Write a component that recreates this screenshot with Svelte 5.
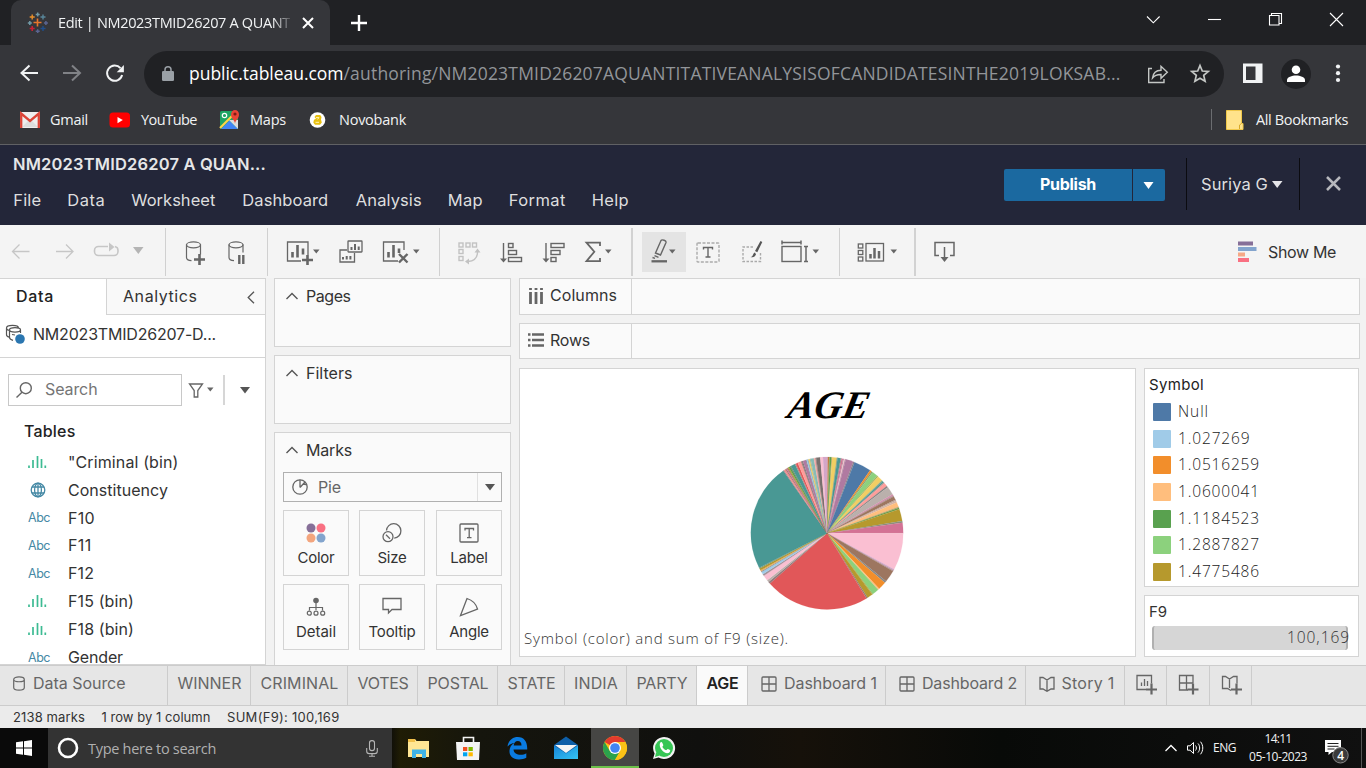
<script>
  // Spreads letters so that a label takes exactly the given width.
  function fit(node, width) {
    const natural = node.getBoundingClientRect().width;
    const count = node.textContent.length;
    node.style.letterSpacing = `${(width - natural) / count}px`;
  }

  const menus = [
    ['File', 28, 54], ['Data', 38, 64], ['Worksheet', 84, 111], ['Dashboard', 86, 113.5],
    ['Analysis', 66, 92], ['Map', 35, 61], ['Format', 57, 83], ['Help', 37, 60]
  ];

  const fields = [
    ['bin', '"Criminal (bin)', 110.5], ['geo', 'Constituency', 100], ['abc', 'F10', 27], ['abc', 'F11', 23.5],
    ['abc', 'F12', 26], ['bin', 'F15 (bin)', 66], ['bin', 'F18 (bin)', 66], ['abc', 'Gender', 55]
  ];

  const legend = [
    ['#4e79a7', 'Null', 31], ['#a0cbe8', '1.027269', 72.5], ['#f28e2b', '1.0516259', 82], ['#ffbe7d', '1.0600041', 82],
    ['#59a14f', '1.1184523', 82], ['#8cd17d', '1.2887827', 82], ['#b6992d', '1.4775486', 82]
  ];

  const sheets = [
    ['WINNER', 64, 83], ['CRIMINAL', 78, 97], ['VOTES', 51, 70], ['POSTAL', 61, 80],
    ['STATE', 48, 67], ['INDIA', 44, 62], ['PARTY', 51, 70]
  ];

  // Slice end angles in degrees, clockwise from the top.
  const slices = [
    [0.6, '#d4a6c8'], [1.6, '#c07a3c'], [2.1, '#9aa05f'], [3.3, '#59a14f'], [3.9, '#a3a15c'], [7.4, '#f1ce63'], [8, '#8f9a72'],
    [10.4, '#499894'], [11, '#8d8a84'], [12.2, '#d37295'], [12.9, '#b08a98'], [13.7, '#fabfd2'], [14.3, '#a98a9c'],
    [20.2, '#b07aa1'], [21.2, '#8b8087'], [34.4, '#4e79a7'], [35.8, '#f28e2b'], [36.9, '#8f9c6c'],
    [41.2, '#8cd17d'], [42.1, '#a3b35c'], [46.2, '#f1ce63'], [47, '#86a88b'], [48.3, '#499894'], [49, '#b8938f'],
    [51.7, '#ff9d9a'], [53, '#8a8483'], [59.2, '#bab0ac'], [60.6, '#d293ae'], [61.2, '#a9848b'], [64, '#9d7660'],
    [64.8, '#b79f92'], [66.2, '#d7b5a6'], [69.7, '#ffbe7d'], [70.5, '#c0a66e'], [71.7, '#6c9d4c'],
    [80.8, '#b6992d'], [82.2, '#8b8e7c'], [90, '#d37295'], [118.2, '#fabfd2'], [119.3, '#d4a6c8'], [120, '#a98c91'],
    [129.2, '#9d7660'], [130.6, '#858789'], [136.8, '#f28e2b'], [137.9, '#ffbe7d'], [143, '#8cd17d'], [143.6, '#9eae53'],
    [147.8, '#b6992d'], [148.8, '#8f7f71'], [228.6, '#e15759'], [230.2, '#94787a'], [231.8, '#bab0ac'], [236, '#fabfd2'],
    [237.4, '#a39299'], [239.3, '#a0cbe8'], [240, '#8d8f8c'], [240.9, '#f1ac5f'], [242.3, '#b6992d'], [243, '#7e9570'],
    [325, '#499894'], [325.6, '#8b8582'], [326.9, '#f08d91'], [327.7, '#9e7468'], [328.5, '#d37295'], [329.1, '#98785b'],
    [329.9, '#b6992d'], [331.1, '#59a14f'], [331.7, '#6a7f61'], [335.1, '#499894'], [335.9, '#a58b86'], [337.4, '#e15759'],
    [340, '#ff9d9a'], [340.7, '#9b7979'], [341.5, '#79706e'], [343.7, '#b07aa1'], [344.3, '#897386'],
    [345.2, '#a0cbe8'], [345.8, '#7da1b8'], [346.9, '#f1ce63'], [347.5, '#a1b090'], [350, '#86bcb6'], [351.2, '#f5a9a5'],
    [351.8, '#a58481'], [354.9, '#79706e'], [357, '#fabfd2'], [360, '#d4a6c8']
  ].map(([end, color], i, all) => {
    const start = i ? all[i - 1][0] : 0;
    const point = (a) => {
      const r = (a * Math.PI) / 180;
      return `${(827.3 + 76.2 * Math.sin(r)).toFixed(2)} ${(533.2 - 76.2 * Math.cos(r)).toFixed(2)}`;
    };
    return { color, d: `M827.3 533.2L${point(start)}A76.2 76.2 0 ${end - start > 180 ? 1 : 0} 1 ${point(end)}Z` };
  });
</script>

{#snippet t(text, width, cls = '')}
  <span class="t {cls}" use:fit={width}>{text}</span>
{/snippet}

<div class="screen">
  <!-- Browser -->
  <div class="tabstrip">
    <div class="tab">
      <svg class="favicon" width="21" height="21" viewBox="27 12 21 21" fill="none">
        <path d="M37.5 18.5v8M33.5 22.5h8" stroke="#e8762c" stroke-width="1.6" />
        <path d="M32.2 14.5v5M29.7 17h5" stroke="#eb9129" stroke-width="1.4" />
        <path d="M43 14.5v5M40.5 17h5" stroke="#59879b" stroke-width="1.4" />
        <path d="M32.2 26v5M29.7 28.5h5" stroke="#c72035" stroke-width="1.6" />
        <path d="M43 26v5M40.5 28.5h5" stroke="#1f4e8c" stroke-width="1.4" />
        <path d="M37.7 12.5v4M35.7 14.5h4M29.8 21v4M27.8 23h4" stroke="#7199a6" stroke-width="1.5" />
        <path d="M45.9 21v4M43.9 23h4M37.7 29.2v4M35.7 31.2h4" stroke="#5b6591" stroke-width="1.5" />
      </svg>
      <div class="tabtitle">{@render t('Edit | NM2023TMID26207 A QUANT', 232)}</div>
      <svg width="12" height="12" viewBox="0 0 12 12"><path d="M1 1l10 10M11 1L1 11" stroke="#fff" stroke-width="2" /></svg>
    </div>
    <svg class="newtab" width="16" height="16" viewBox="0 0 16 16"><path d="M8 0v16M0 8h16" stroke="#fff" stroke-width="2.4" /></svg>
    <svg class="winbtns" width="226" height="45" viewBox="1140 0 226 45" fill="none" stroke="#fff" stroke-width="1.1">
      <path d="M1147 16.5l6.3 6.3 6.3-6.3" />
      <path d="M1208 19.5h13" />
      <path d="M1269.5 15.5h9.5v9.5h-9.5zM1271.5 15.5v-2h10v10h-2.300" />
      <path d="M1330 13l13 13M1343 13l-13 13" />
    </svg>
  </div>

  <div class="addressrow">
    <svg width="144" height="57" viewBox="0 45 144 57" fill="none" stroke-width="2">
      <path d="M38 73H22M29.500 65.500L21.500 73l8 7.500" stroke="#f1f3f4" />
      <path d="M63 73h16M72 65.500l8 7.500-8 7.500" stroke="#808286" />
      <path d="M120.500 68.200a7.600 7.600 0 1 0 1.600 6.800" stroke="#f1f3f4" />
      <path d="M123.900 65v7.200h-7.200z" fill="#f1f3f4" />
    </svg>
    <div class="omnibox">
      <svg width="12" height="16" viewBox="0 0 12 16"><rect y="5" width="12" height="10" rx="1.300" fill="#9aa0a6" /><path d="M3 6V3.800a3 3 0 0 1 6 0V6" fill="none" stroke="#9aa0a6" stroke-width="1.500" /></svg>
      <div class="url">{@render t('public.tableau.com', 154.500, 'host')}{@render t('/authoring/NM2023TMID26207AQUANTITATIVEANALYSISOFCANDIDATESINTHE2019LOKSAB...', 777)}</div>
      <svg width="72" height="45" viewBox="1144 52 72 45" fill="none" stroke="#c4c7c5" stroke-width="1.400">
        <path d="M1152 68.500h-3.300v14h15.300v-3.500" />
        <path d="M1152.500 78c.6-5 3.700-7.600 8.500-7.700v-4l6.300 6-6.300 6v-3.800c-3.800-.1-6.400.9-8.500 3.500z" />
        <path d="M1200 65.500l2.300 5.500 6 .5-4.600 3.900 1.400 5.900-5.100-3.100-5.100 3.100 1.400-5.900-4.600-3.900 6-.5z" stroke-width="1.700" />
      </svg>
    </div>
    <svg width="142" height="57" viewBox="1224 45 142 57">
      <path d="M1243 63.500h19.500v19.500h-19.500zM1246 66.500v13.500h9.500V66.500z" fill="#f1f3f4" fill-rule="evenodd" />
      <circle cx="1296" cy="74" r="15" fill="#202124" />
      <circle cx="1296" cy="69.800" r="4.300" fill="#fff" />
      <path d="M1287 82v-2c0-3 5-4.500 9-4.500s9 1.500 9 4.500v2z" fill="#fff" />
      <g fill="#f1f3f4"><circle cx="1338" cy="66.500" r="2.100" /><circle cx="1338" cy="73.200" r="2.100" /><circle cx="1338" cy="80" r="2.100" /></g>
    </svg>
  </div>

  <div class="bookmarks">
    <svg width="50" height="34" viewBox="0 103 50 34">
      <rect x="20" y="112" width="20" height="16" rx="1" fill="#eee" />
      <path d="M22 127l8-8 8 8z" fill="#ddd" />
      <path d="M21.200 128v-14.500l8.800 7.500 8.800-7.500V128" fill="none" stroke="#db4437" stroke-width="2.300" />
    </svg>
    {@render t('Gmail', 38)}
    <svg width="53" height="34" viewBox="88 103 53 34"><rect x="109.500" y="112.500" width="20.500" height="15" rx="3.500" fill="#f00" /><path d="M117.500 117v6.200l5.300-3.100z" fill="#fff" /></svg>
    {@render t('YouTube', 56)}
    <svg width="53" height="34" viewBox="197 103 53 34">
      <rect x="220" y="111" width="18" height="18" rx="1.500" fill="#1fa463" />
      <path d="M221 129l8.500-8.500 8.500 8.500z" fill="#4285f4" />
      <path d="M220 128l16-16" stroke="#ffd54a" stroke-width="2.200" />
      <path d="M229 120l9 9v-9z" fill="#ddd" />
      <circle cx="224.500" cy="115.500" r="2.200" fill="none" stroke="#fff" stroke-width="1.200" />
      <path d="M235 124c0-4-4-5-4-9.500a4 4.500 0 0 1 8 0c0 4.500-4 5.500-4 9.500z" fill="#ea4335" /><circle cx="235" cy="114" r="1.600" fill="#7d1c14" />
    </svg>
    {@render t('Maps', 36)}
    <svg width="53" height="34" viewBox="286 103 53 34">
      <circle cx="317.500" cy="120" r="7.800" fill="#fff" />
      <path d="M314.500 117l1.500-2h4.200l1.300 2-.5 2.500.8 3-1.800 2.300h-5l-1.700-2.300.7-2.700 2-1z" fill="#e8c010" />
      <path d="M316 117.600h3l-1.500 1.800M315.500 122.300h3.500" fill="none" stroke="#fff3b8" />
    </svg>
    {@render t('Novobank', 67)}
    <div class="grow"></div>
    <svg width="45" height="34" viewBox="1211 103 45 34">
      <path d="M1211.500 109v21" stroke="#6b6d70" />
      <path d="M1226.500 110.500h15v13h1.500v6h-16.500z" fill="#ffe38b" stroke="#f0c84a" />
      <path d="M1239.500 129v-4l2-1.500" fill="none" stroke="#d9a928" />
    </svg>
    {@render t('All Bookmarks', 92)}
  </div>

  <!-- Workbook header -->
  <header>
    <div class="headleft">
      <div class="book">{@render t('NM2023TMID26207 A QUAN...', 253)}</div>
      <nav>
        {#each menus as [name, w, cell]}
          <div class="menu" style:width="{cell}px">{@render t(name, w)}</div>
        {/each}
      </nav>
    </div>
    <div class="publish">{@render t('Publish', 56)}</div>
    <div class="publishmore"><svg width="11" height="7" viewBox="0 0 11 7"><path d="M.5 0h10L5.500 7z" fill="#fff" /></svg></div>
    <div class="user">
      {@render t('Suriya G', 67)}
      <svg width="11" height="7" viewBox="0 0 11 7"><path d="M0 0h10.500L5.200 7z" fill="#e4e4e8" /></svg>
    </div>
    <svg class="close" width="15" height="15" viewBox="0 0 15 15"><path d="M1 1l13 13M14 1L1 14" stroke="#b7b8bd" stroke-width="2.500" /></svg>
  </header>

  <!-- Toolbar -->
  <div class="toolbar">
    <svg width="166" height="53" viewBox="0 225 166 53" fill="none" stroke="#c6c6c6" stroke-width="1.300">
      <path d="M29.500 251.500h-17M19.500 244.500l-7 7 7 7" />
      <path d="M56 251.500h17M66 244.500l7 7-7 7" />
      <path d="M108 246.500h-9.500a4 4 0 0 0-4 4v1a4 4 0 0 0 4 4h15.500a4 4 0 0 0 4-4v-1a4 4 0 0 0-3-4" stroke-width="1.600" />
      <path d="M109 242.500l5.500 4.500-5.500 4.500z" fill="#c6c6c6" stroke="none" />
      <path d="M133 247h10.500l-5.200 7z" fill="#b4b4b4" stroke="none" />
      <path d="M165.500 228v48" stroke="#d0d0d0" stroke-width="1" />
    </svg>
    <svg width="102" height="53" viewBox="166 225 102 53" fill="none" stroke="#666" stroke-width="1.200">
      <ellipse cx="193.500" cy="244.800" rx="7" ry="3" /><path d="M186.500 244.500v13c0 2 2 3 5 3.200M200.500 244.500v10" />
      <path d="M199.500 254v11M194 259.500h11" stroke-width="2.600" />
      <ellipse cx="236" cy="244.800" rx="7" ry="3" /><path d="M229 244.500v13c0 2 2 3 5 3.200M243 244.500v8" />
      <path d="M239.300 255v9M243.300 255v9" stroke-width="2.400" />
      <path d="M267.500 228v48" stroke="#d0d0d0" stroke-width="1" />
    </svg>
    <svg width="172" height="53" viewBox="268 225 172 53" fill="none" stroke="#666" stroke-width="1.300">
      <path d="M301 261h-13.500v-19h20.500v13" />
      <path d="M292.500 252v5.500M297.500 245v12.500M303 248.500v6" stroke-width="2.600" />
      <path d="M307.500 255v10M302 260h11" stroke-width="2.600" />
      <path d="M347 250h-7v12h14.500v-9" /><rect x="348" y="241" width="14" height="11" rx=".5" />
      <path d="M343 257v2.500M346.700 256v3.500M350.400 256v3.500M351.500 247v3M355 244v6M358.700 246.500v3.500" stroke-width="2" />
      <path d="M398 261h-14.500v-19h20.500v8" />
      <path d="M388.500 252v5.500M393.500 245v12.500M399 248.500v4.500" stroke-width="2.600" />
      <path d="M399 254l8.500 8.500M407.500 254l-8.500 8.500" stroke-width="2.400" />
      <path d="M313 249.500h6.500l-3.200 4zM413 249.500h6.500l-3.200 4z" fill="#666" stroke="none" />
      <path d="M439.500 228v48" stroke="#d0d0d0" stroke-width="1" />
    </svg>
    <svg width="193" height="53" viewBox="440 225 193 53" fill="none" stroke="#666" stroke-width="1.400">
      <g stroke="#c2c2c2"><rect x="459" y="243" width="4" height="4" /><rect x="466" y="243" width="4" height="4" /><rect x="472.500" y="243" width="4" height="4" /><rect x="459" y="249.500" width="4" height="4" /><rect x="459" y="256.500" width="4" height="4" />
        <path d="M477.500 252c0 5-3 9-9.500 9.500" /><path d="M474.500 252.500l3-4 3 4zM469 258.500l-4 3 4 3z" fill="#c2c2c2" stroke="none" /></g>
      <path d="M503.500 243v17" /><path d="M500 258.500l3.500 4 3.500-4z" fill="#666" stroke="none" />
      <rect x="508.500" y="243.500" width="4.500" height="4" /><rect x="508.500" y="250.500" width="8" height="4" /><rect x="508.500" y="257.500" width="13" height="4" />
      <path d="M546 243v17" /><path d="M542.500 258.500l3.500 4 3.500-4z" fill="#666" stroke="none" />
      <rect x="551" y="243.500" width="13" height="4" /><rect x="551" y="250.500" width="9" height="4" /><rect x="551" y="257.500" width="5" height="4" />
      <path d="M600 246v-3.300h-13.500l7.800 9-7.800 9.500H600V258" stroke-width="1.800" />
      <path d="M605 249.500h6.500l-3.200 4z" fill="#666" stroke="none" />
      <path d="M632 228v48" stroke="#cfcfcf" stroke-width="1.800" />
    </svg>
    <svg width="207" height="53" viewBox="633 225 207 53" fill="none" stroke="#666" stroke-width="1.400">
      <rect x="642" y="232" width="44" height="40" fill="#e4e4e4" stroke="none" />
      <path d="M655.500 253l5.500-12.500c1-1.500 5.500.2 5 2l-5.500 12.500zM654.500 255.700l4 1.700M652.500 257.500l2.500.8" />
      <path d="M651.500 261.300h15.500" stroke-width="2.300" />
      <path d="M669 249.500h6.500l-3.200 4z" fill="#666" stroke="none" />
      <rect x="697" y="243" width="22" height="19" rx="1" stroke="#aaa" stroke-dasharray="3 1.500" />
      <path d="M703.500 249.500v-2h9v2M708 247.500v9.500M705.500 257h5" />
      <path d="M753 247h-10v14.500h17.500V253" stroke="#aaa" stroke-dasharray="2.500 1.500" />
      <path d="M755 251l5.500-10 1.800 1-5 10.200zM750.500 257c3 0 2-4 4.500-4.500l1 2c-1 2-2.500 3.500-5.500 2.500z" fill="#555" stroke="none" />
      <path d="M782 240.500v4M801 240.500v4M782 242.500h19M804 246.500h4M804 261.500h4M806 246.500v15" stroke-width="1.500" /><rect x="782" y="246.500" width="19" height="15" />
      <path d="M812.500 249.500h6.500l-3.200 4z" fill="#666" stroke="none" />
      <path d="M839.500 228v48" stroke="#d0d0d0" stroke-width="1" />
    </svg>
    <svg width="76" height="53" viewBox="840 225 76 53" fill="none" stroke="#666" stroke-width="1.300">
      <rect x="858.300" y="244" width="4.500" height="4" /><rect x="858.300" y="250.500" width="4.500" height="4" /><rect x="858.300" y="257" width="4.500" height="4" /><rect x="866" y="243.500" width="17.500" height="17.500" />
      <path d="M870.500 254v4.500M874.500 248v10.500M879 251v7.500" stroke-width="2.500" />
      <path d="M890.500 249.500h6.500l-3.200 4z" fill="#666" stroke="none" />
      <path d="M915 228v48" stroke="#cfcfcf" stroke-width="1.800" />
    </svg>
    <svg width="60" height="53" viewBox="916 225 60 53" fill="none" stroke="#666" stroke-width="1.500"><path d="M939 255.500h-4v-13h19v13h-4M944.500 247v11" /><path d="M940.500 257h8l-4 5z" fill="#666" stroke="none" /></svg>
    <div class="grow"></div>
    <svg width="30" height="53" viewBox="1238 225 30 53">
      <rect x="1238" y="241.500" width="15" height="4" fill="#866f98" /><rect x="1238" y="247" width="18.500" height="4" fill="#83a4cd" /><rect x="1238" y="252.500" width="7" height="4" fill="#f6a886" /><rect x="1238" y="258" width="11" height="4" fill="#f97082" />
    </svg>
    <div class="showme">{@render t('Show Me', 68)}</div>
  </div>

  <!-- Workspace -->
  <main>
    <aside>
      <div class="sidetabs">
        <div class="on">{@render t('Data', 38)}</div>
        <div class="off">{@render t('Analytics', 74.500)}
          <svg width="8" height="13" viewBox="0 0 8 13"><path d="M7 .8L1.200 6.500 7 12.200" fill="none" stroke="#555" stroke-width="1.300" /></svg></div>
      </div>
      <div class="source">
        <svg width="33" height="42" viewBox="0 315 33 42" fill="none" stroke="#555" stroke-width="1.200">
          <path d="M6.500 328v6.500c0 1.500 1 2.300 2.500 2.600M6.500 328c0-3.500 12-3.500 12 0M6.500 328.300c0 1.700 1.500 2 3.500 2.200M9.500 329.800c0-3 11-3 11 0s-11 3-11 0v7.500c0 2 1.500 2.600 3.500 3M20.500 330v3M12 334.500l3 .5" />
          <circle cx="20" cy="339" r="4.800" fill="#2a76b0" stroke="none" />
        </svg>
        {@render t('NM2023TMID26207-D...', 183)}
      </div>
      <div class="find">
        <div class="search">
          <svg width="16" height="16" viewBox="0 0 16 16" fill="none" stroke="#666" stroke-width="1.400"><circle cx="9.800" cy="6.200" r="5.500" /><path d="M6 10.200L.5 15.500" /></svg>
          {@render t('Search', 52.500)}
        </div>
        <svg width="74" height="32" viewBox="182 374 74 32" fill="none" stroke="#666" stroke-width="1.300">
          <path d="M189.500 384h13l-4.700 6.500v6.500h-3.600v-6.500z" /><path d="M207 387.500h6.500l-3.200 4z" fill="#666" stroke="none" />
          <path d="M224 375v30" stroke="#ccc" stroke-width="1.600" /><path d="M240 387h10l-5 6.500z" fill="#555" stroke="none" />
        </svg>
      </div>
      <div class="tables">{@render t('Tables', 51.500)}</div>
      {#each fields as [kind, name, w]}
        <div class="field">
          <div class="kind">
            {#if kind === 'bin'}
              <svg width="20" height="14" viewBox="0 0 20 14" stroke="#3dbb93" stroke-width="1.700"><path d="M1 10.500V13M5 5v8M9.500 1v12M13.500 4v9M17.300 10.500V13" /></svg>
            {:else if kind === 'geo'}
              <svg width="20" height="16" viewBox="-2 0 20 16" fill="none" stroke="#4589a5" stroke-width="1.300"><circle cx="8" cy="8" r="6.800" /><ellipse cx="8" cy="8" rx="3.400" ry="6.800" /><path d="M2 5h12M2 11h12M8 1v14" /></svg>
            {:else}{@render t('Abc', 22, 'abc')}{/if}
          </div>
          {@render t(name, w)}
        </div>
      {/each}
    </aside>

    <section class="cards">
      {#each [['Pages', 44.500], ['Filters', 46.500]] as [name, w]}
        <div class="card">
          <div class="cardhead"><svg width="12" height="8" viewBox="0 0 12 8"><path d="M.5 7L6 1.500 11.500 7" fill="none" stroke="#555" stroke-width="1.400" /></svg>{@render t(name, w)}</div>
        </div>
      {/each}
      <div class="card marks">
        <div class="cardhead"><svg width="12" height="8" viewBox="0 0 12 8"><path d="M.5 7L6 1.500 11.500 7" fill="none" stroke="#555" stroke-width="1.400" /></svg>{@render t('Marks', 46)}</div>
        <div class="select">
          <svg width="16" height="16" viewBox="0 0 16 16" fill="none" stroke="#666" stroke-width="1.300"><circle cx="8" cy="8" r="7.200" /><path d="M8 8.500V.8M8 8.500l5-5.500M11 5l3 .5" /></svg>
          {@render t('Pie', 23)}
          <div class="drop"><svg width="10" height="7" viewBox="0 0 10 7"><path d="M0 0h10L5 6.500z" fill="#555" /></svg></div>
        </div>
        <div class="grid">
          <div class="mark"><svg width="22" height="22" viewBox="0 0 22 22"><circle cx="6" cy="6" r="4.500" fill="#866f98" /><circle cx="16" cy="6" r="4.500" fill="#f97082" /><circle cx="6" cy="16" r="4.500" fill="#f3a57e" /><circle cx="16" cy="16" r="4.500" fill="#83a4cd" /></svg>{@render t('Color', 37)}</div>
          <div class="mark"><svg width="22" height="22" viewBox="0 0 22 22" fill="none" stroke="#666" stroke-width="1.300"><path d="M5.500 8.500a7.200 7.200 0 1 1 7.700 7.600" /><circle cx="7" cy="14.700" r="5" /><path d="M5 12.700l4 4" /></svg>{@render t('Size', 29)}</div>
          <div class="mark"><svg width="22" height="22" viewBox="0 0 22 22" fill="none" stroke="#666" stroke-width="1.300"><rect x="2" y="2" width="18" height="18" rx="1" /><path d="M7 8.500V6.500h8.500v2M11.200 6.500v9M9 15.700h4.500" /></svg>{@render t('Label', 37.500)}</div>
          <div class="mark"><svg width="22" height="22" viewBox="0 0 22 22" fill="none" stroke="#666" stroke-width="1.200"><circle cx="11" cy="4.500" r="2.800" fill="#666" stroke="none" /><path d="M11 6v8M4.500 14.500V11.500h13v3" /><circle cx="4.300" cy="17.200" r="2" /><circle cx="11" cy="17.200" r="2" /><circle cx="17.700" cy="17.200" r="2" /></svg>{@render t('Detail', 40)}</div>
          <div class="mark"><svg width="22" height="22" viewBox="0 0 22 22" fill="none" stroke="#666" stroke-width="1.300"><path d="M2 2.500h18v11h-9l-3.500 3.500v-3.500H2z" /></svg>{@render t('Tooltip', 47)}</div>
          <div class="mark"><svg width="22" height="22" viewBox="0 0 22 22" fill="none" stroke="#666" stroke-width="1.300"><path d="M2.500 19.500L9 2.500c5 1.500 9 5.500 10.500 10.500z" /></svg>{@render t('Angle', 39.500)}</div>
        </div>
      </div>
    </section>

    <section class="canvas">
      <div class="shelf">
        <div class="shelfname"><svg width="16" height="16" viewBox="0 0 16 16" stroke="#666" stroke-width="2.800"><path d="M2.500 0v2M2.500 4v12M8 0v2M8 4v12M13.500 0v2M13.500 4v12" /></svg>{@render t('Columns', 67)}</div>
      </div>
      <div class="shelf rows">
        <div class="shelfname"><svg width="16" height="16" viewBox="0 0 16 16" stroke="#666" stroke-width="2.600"><path d="M0 2.500h2.500M4 2.500h12M0 8h2.500M4 8h12M0 13.500h2.500M4 13.500h12" /></svg>{@render t('Rows', 40)}</div>
      </div>
      <div class="lower">
        <div class="viz">
          <div class="title">{@render t('AGE', 90)}</div>
          <svg class="pie" width="154" height="154" viewBox="750.300 456 154 154">
            {#each slices as s}<path d={s.d} fill={s.color} stroke={s.color} stroke-width=".15" />{/each}
          </svg>
          <div class="caption">{@render t('Symbol (color) and sum of F9 (size).', 265)}</div>
        </div>
        <div class="legends">
          <div class="legend">
            <div class="ltitle">{@render t('Symbol', 55)}</div>
            {#each legend as [color, label, w]}
              <div class="lrow"><i style:background={color}></i>{@render t(label, w)}</div>
            {/each}
          </div>
          <div class="sizes">
            <div class="ltitle">{@render t('F9', 18)}</div>
            <div class="bar">{@render t('100,169', 63)}</div>
          </div>
        </div>
      </div>
    </section>
  </main>

  <!-- Sheet tabs -->
  <div class="sheets">
    <div class="datasource">
      <svg width="12" height="15" viewBox="0 0 12 15" fill="none" stroke="#666" stroke-width="1.200"><path d="M.7 3.500c0-3.500 10.600-3.500 10.600 0v8c0 3.500-10.600 3.500-10.600 0zc0 3 10.600 3 10.600 0" /></svg>
      {@render t('Data Source', 92.500)}
    </div>
    {#each sheets as [name, w, cell]}
      <div class="sheet" style:width="{cell}px">{@render t(name, w)}</div>
    {/each}
    <div class="sheet active">{@render t('AGE', 32)}</div>
    {#each [['Dashboard 1', 93, 138], ['Dashboard 2', 95, 140]] as [name, w, cell]}
      <div class="sheet wide" style:width="{cell}px">
        <svg width="16" height="16" viewBox="0 0 16 16" fill="none" stroke="#666" stroke-width="1.300"><rect x="1" y="1" width="14" height="14" rx="1" /><path d="M8 1v14M1 8h14" /></svg>
        {@render t(name, w)}
      </div>
    {/each}
    <div class="sheet story">
      <svg width="16" height="16" viewBox="0 0 16 16" fill="none" stroke="#666" stroke-width="1.300"><path d="M1 1.500h3L8 4l4-2.500h3v11.500h-3L8 15.300 4 13H1zM8 4v11" /></svg>
      {@render t('Story 1', 53)}
    </div>
    <svg width="127" height="40" viewBox="1125 665 127 40" fill="none" stroke="#666" stroke-width="1.300">
      <path d="M1146 688.500h-9v-14h14.500v8M1141.500 681.500v3.500M1144.500 678v7M1147.500 680v5" /><path d="M1151.500 682.500v11M1146 688.500h11" stroke-width="2.200" />
      <path d="M1188 689h-8.500v-14.500h13.500v8M1179.500 682h13.500M1186.500 674.500v14.500" /><path d="M1193 682.500v11M1187.500 688.500h11" stroke-width="2.200" />
      <path d="M1231 689.500l-3.500-2h-5v-12h3l4 2.500 4-2.500h3.500v7M1229.500 678v9" /><path d="M1236.500 682.500v11M1231 688.500h11" stroke-width="2.200" />
      <path d="M1166.500 665v40M1209.500 665v40M1251.500 665v40" stroke="#ccc" stroke-width="1" />
    </svg>
  </div>

  <div class="status">
    {@render t('2138 marks', 72)}{@render t('1 row by 1 column', 109)}{@render t('SUM(F9): 100,169', 112.500)}
  </div>

  <!-- Taskbar -->
  <div class="taskbar">
    <svg width="48" height="40" viewBox="0 728 48 40"><path d="M16 742.300l7-1v6.200h-7zM24 741.200l8-1.200v7.500h-8zM16 748.500h7v6.200l-7-1zM24 748.500h8v7.500l-8-1.200z" fill="#fff" /></svg>
    <div class="cortana">
      <svg width="22" height="22" viewBox="0 0 22 22"><circle cx="11" cy="11" r="9" fill="none" stroke="#fff" stroke-width="2.600" /></svg>
      {@render t('Type here to search', 128)}
      <svg class="mic" width="12" height="17" viewBox="0 0 12 17" fill="none" stroke="#b5b5b5" stroke-width="1.100"><rect x="3.500" y=".6" width="5" height="10" rx="2.300" /><path d="M.7 8v3.300c0 1.500 1 2.300 2.500 2.300h5.600c1.500 0 2.500-.8 2.500-2.300V8M6 13.500V16M3 16.200h6" /></svg>
    </div>
    <svg width="199" height="40" viewBox="392 728 199 40">
      <defs>
        <linearGradient id="mailg" x1="0" y1="0" x2="1" y2="1"><stop offset="0" stop-color="#1684d8" /><stop offset="1" stop-color="#35c3f3" /></linearGradient>
      </defs>
      <path d="M408 739h7l1.500 2h12.500v16h-21z" fill="#ffe694" /><path d="M408 739h7v3h-7z" fill="#f2c14b" />
      <path d="M412 758v-8.500h14v8.500h-4v-4h-6v4z" fill="#3fb2e5" />
      <path d="M463.500 743.500v-6h10v6" fill="none" stroke="#f3f3f3" stroke-width="1.600" /><path d="M456 742h24l-1 18h-22z" fill="#f4f4f4" />
      <path d="M463 747h4.300v4H463z" fill="#f25022" /><path d="M468.500 747h4.300v4h-4.300z" fill="#7fba00" /><path d="M463 752.300h4.300v4H463z" fill="#00a4ef" /><path d="M468.500 752.300h4.300v4h-4.300z" fill="#ffb900" />
      <path d="M507.500 746.500c.8-6 5-9.500 10.300-9.500 6.500 0 9.700 5 9.400 12.500h-13.700c.3 3.800 3.500 5.300 7 5.300 2.300 0 4.300-.6 5.800-1.600v4.500c-2 1.200-4.500 1.700-7.300 1.700-6.800 0-9.800-4-9.500-8.800.2-3.500 2-6.300 5-7.700-2.700.3-5.200 1.500-7 3.600zm6.200-1h7.800c0-3-1.300-4.500-3.700-4.500s-3.800 1.800-4.100 4.500z" fill="#0a7be0" />
      <path d="M554 745l12-8.500 12 8.500v14h-24z" fill="#0e5fa8" /><path d="M554 745.500l12 8 12-8V759h-24z" fill="url(#mailg)" /><path d="M555 745h22l-11 8z" fill="#f4f4f4" />
    </svg>
    <div class="chrome">
      <svg width="26" height="26" viewBox="-13 -13 26 26">
        <circle r="12" fill="#fbc116" />
        <path d="M0 0L-10.400-6A12 12 0 0 1 10.400-6H0z" fill="#e33b2e" /><path d="M-10.400-6L-5.200 3 0 6V12A12 12 0 0 1-10.400-6z" fill="#2ba24c" /><path d="M0 12l5.200-9H-5z" fill="#2ba24c" /><path d="M0 12L5.200 3V-6H10.400A12 12 0 0 1 0 12z" fill="#fbc116" />
        <circle r="6" fill="#fff" /><circle r="4.800" fill="#4285f4" />
      </svg>
    </div>
    <svg width="49" height="40" viewBox="639 728 49 40">
      <path d="M653 759l1.600-5.500a11 11 0 1 1 4 4z" fill="#f2f2f2" /><circle cx="664" cy="748" r="9" fill="#36c655" /><path d="M655 757l1.200-5 3.500 3.600z" fill="#36c655" />
      <path d="M660 743c1-1.500 2-1 2.500.2l.8 1.800c.2.700-.9 1.600-.9 1.900.8 1.500 2.200 2.800 3.700 3.300.4 0 1.200-1.500 1.800-1.300l2.100 1.100c.8.600-.3 2.700-1.500 3.100-4 1.200-10.200-5-8.500-10.100z" fill="#fff" />
    </svg>
    <div class="grow"></div>
    <svg width="53" height="40" viewBox="1160 728 53 40" fill="none" stroke="#fff" stroke-width="1.300">
      <path d="M1165.500 751l5.500-5.500 5.500 5.500" /><path d="M1187.500 745.800h2.500l3.500-3.300v11l-3.500-3.300h-2.500zM1195.500 745.500c1.200 1.500 1.200 3.500 0 5M1198 743.500c2.200 2.600 2.200 6.400 0 9M1200.500 741.700c3 3.600 3 9 0 12.600" stroke-width="1" />
    </svg>
    <div class="lang">{@render t('ENG', 23)}</div>
    <div class="clock">{@render t('14:11', 27)}{@render t('05-10-2023', 58)}</div>
    <svg width="59" height="40" viewBox="1307 728 59 40">
      <path d="M1325 740h16v12h-9l-3.500 3v-3H1325z" fill="#fff" /><path d="M1327.500 743.500h11M1327.500 746.300h11M1327.500 749h7" stroke="#222" />
      <circle cx="1340.500" cy="755.300" r="7.700" fill="#3b3b3b" stroke="#888" /><text x="1337.300" y="759.800" fill="#fff" font-size="12" font-weight="600">4</text>
      <path d="M1361.500 728v40" stroke="#555" />
    </svg>
  </div>
</div>

<style>
  :global(body) { margin: 0; overflow: hidden; }
  .screen { width: 1366px; height: 768px; overflow: hidden; display: flex; flex-direction: column; background: #f2f2f2; font: 16px/1 Inter, sans-serif; color: #333; }
  .screen > * { flex: none; box-sizing: border-box; }
  svg { display: block; flex: none; }
  .t { display: inline-block; white-space: pre; flex: none; }
  .grow { flex: 1; }

  .tabstrip, .addressrow, .bookmarks, .taskbar { font-family: 'Open Sans', sans-serif; color: #f1f3f4; display: flex; }
  .tabstrip { height: 45px; background: #202124; }
  .tab { width: 319px; margin-left: 11px; background: #35363a; border-radius: 10px 10px 0 0; display: flex; align-items: center; box-sizing: border-box; padding-left: 16px; font-size: 14.500px; }
  .tabtitle { width: 232px; margin: 0 12px 0 10px; line-height: 22px; mask-image: linear-gradient(90deg, #000 215px, transparent 236px); }
  .newtab { margin: 15px 0 0 21px; }
  .winbtns { margin-left: auto; }
  .addressrow { height: 57px; background: #35363a; }
  .omnibox { width: 1080px; height: 46px; margin-top: 6px; border-radius: 23px; background: #202124; display: flex; align-items: center; box-sizing: border-box; padding-left: 18px; }
  .url { margin: -2px 0 0 15px; width: 955px; font-size: 17.500px; line-height: 24px; color: #929599; white-space: nowrap; }
  .host { color: #fff; }
  .bookmarks { height: 43px; background: #35363a; border-bottom: 1px solid #606164; align-items: flex-start; padding: 1px 18px 0 0; font-size: 14.500px; line-height: 33px; }

  header { height: 80px; background: #232639; display: flex; color: #dededf; }
  .headleft { width: 1004px; padding-left: 13px; box-sizing: border-box; }
  .book { font-size: 16.500px; font-weight: 600; line-height: 20px; padding-top: 9px; color: #e6e6e8; }
  nav { display: flex; margin-top: 16px; line-height: 20px; font-size: 16.500px; }
  .menu { padding-left: .3px; box-sizing: border-box; }
  .publish { width: 128px; height: 32px; margin-top: 24px; background: #1b69a0; border-radius: 2px 0 0 2px; line-height: 31px; text-align: center; font-weight: 700; color: #fff; }
  .publishmore { width: 32px; height: 32px; margin: 24px 21px 0 1px; background: #1b69a0; border-radius: 0 2px 2px 0; display: grid; place-items: center; padding-right: 1px; box-sizing: border-box; }
  .user { width: 98px; height: 52px; margin-top: 13px; border: solid #0b0b10; border-width: 0 1px; display: flex; align-items: center; gap: 4px; padding-left: 14px; font-size: 16.500px; }
  .close { margin: 31px 0 0 26px; }

  .toolbar { height: 53px; background: #f4f4f4; display: flex; }
  .showme { width: 98px; line-height: 54px; }

  main { height: 387px; display: flex; background: #f2f2f2; }
  aside { width: 266px; box-sizing: border-box; border: 1px solid #d4d4d4; border-left: 0; background: #fff; overflow: hidden; }
  .sidetabs { display: flex; height: 36px; line-height: 34px; }
  .on { width: 90px; padding-left: 16px; color: #222; font-weight: 500; }
  .off { flex: 1; background: #f9f9f9; border: solid #d4d4d4; border-width: 0 0 1px 1px; padding: 0 10px 0 16px; display: flex; align-items: center; justify-content: space-between; }
  .off .t { margin-top: -2px; }
  .off svg { margin-top: 2px; }
  .source { height: 43px; box-sizing: border-box; border-bottom: 1px solid #d4d4d4; display: flex; line-height: 39px; }
  .find { display: flex; margin: 16px 0 0 8px; }
  .search { width: 174px; height: 32px; box-sizing: border-box; border: 1px solid #c8c8c8; display: flex; align-items: center; gap: 13px; padding-left: 7px; color: #757575; }
  .search .t { margin-top: -2px; }
  .tables { padding-left: 24px; font-weight: 500; color: #222; line-height: 30px; height: 42px; padding-top: 10px; box-sizing: border-box; }
  .field { height: 27.850px; display: flex; align-items: center; padding-left: 28px; }
  .kind { width: 40px; font-size: 12.500px; color: #4589a5; }
  .abc { padding-top: 2px; }

  .cards { width: 237px; margin: 0 8px; display: flex; flex-direction: column; gap: 8px; overflow: hidden; }
  .card { height: 69px; flex: none; box-sizing: border-box; border: 1px solid #d4d4d4; background: #fafafa; }
  .marks { height: 240px; }
  .cardhead { display: flex; gap: 8px; align-items: center; height: 33px; padding: 0 0 2px 11px; }
  .select { height: 30px; box-sizing: border-box; margin: 4px 8px 8px; border: 1px solid #b0b0b0; display: flex; align-items: center; gap: 10px; padding-left: 8px; color: #666; background: #fafafa; }
  .drop { width: 23px; height: 28px; margin-left: auto; border-left: 1px solid #e0e0e0; display: grid; place-items: center; }
  .grid { display: grid; grid-template-columns: 76px 77px 66px; row-gap: 8px; margin: 0 8px; }
  .mark { width: 66px; height: 66px; box-sizing: border-box; border: 1px solid #d4d4d4; display: flex; flex-direction: column; align-items: center; gap: 5px; padding-top: 11px; font-size: 15px; line-height: 18px; }

  .canvas { flex: 1; padding-right: 6px; }
  .shelf { height: 37px; box-sizing: border-box; border: 1px solid #d4d4d4; background: #fafafa; }
  .shelf.rows { margin: 8px 0 9px; height: 36px; }
  .shelfname { width: 103px; height: 34px; padding-left: 8px; border-right: 1px solid #d4d4d4; display: flex; align-items: center; gap: 6px; }
  .shelf:not(.rows) .shelfname { height: 35px; }
  .shelfname svg { margin-top: -2px; }
  .shelfname .t { margin-top: -3px; }
  .lower { display: flex; height: 289px; gap: 8px; }
  .viz { width: 617px; box-sizing: border-box; border: 1px solid #d4d4d4; background: #fff; display: flex; flex-direction: column; }
  .title { font: italic bold 39px/44px 'Liberation Serif', serif; color: #000; width: 90px; margin: 14px 0 0 269px; transform: skewX(-12deg); }
  .pie { margin: 29px 0 0 230px; }
  .caption { font: 300 15px/20px 'Open Sans', sans-serif; color: #333; margin: 18px 0 0 4px; }
  .legends { width: 215px; display: flex; flex-direction: column; gap: 8px; }
  .legend, .sizes { box-sizing: border-box; border: 1px solid #d4d4d4; background: #fff; }
  .legend { height: 219px; font: 300 15.500px/18px 'Open Sans', sans-serif; color: #222; }
  .ltitle { font: 400 15px/18px Inter, sans-serif; padding: 7px 0 5px 4px; }
  .lrow { height: 26.600px; display: flex; align-items: center; gap: 7px; padding-left: 8px; line-height: 24px; }
  .lrow .t { margin-top: -2px; }
  .lrow i { width: 18px; height: 18px; border-radius: 1px; }
  .sizes { height: 62px; }
  .bar { width: 196px; height: 24px; box-sizing: border-box; margin-left: 7px; background: #d6d6d6; border: solid #b0b0b0; border-width: 0 2px; border-radius: 3px; font: 300 15.500px/22px 'Open Sans', sans-serif; padding-left: 133px; }

  .sheets { height: 41px; background: #e6e6e6; border: solid #ccc; border-width: 1px 0; display: flex; color: #666; line-height: 34px; }
  .datasource { width: 168px; box-sizing: border-box; border-right: 1px solid #ccc; display: flex; align-items: center; gap: 8px; padding: 0 0 4px 13px; }
  .sheet { box-sizing: border-box; border-right: 1px solid #ccc; padding: 0 0 4px 1px; display: flex; align-items: center; justify-content: center; gap: 7px; }
  .sheets .t { margin-top: -2px; }
  .sheet.wide { padding-left: 5px; }
  .sheet.active { width: 51px; background: #fafafa; color: #222; font-weight: 600; }
  .sheet.story { width: 99px; padding-left: 3px; }
  .status { height: 22px; background: #ebebeb; display: flex; gap: 16.500px; padding-left: 13px; font-size: 13px; line-height: 22px; }
  .taskbar { height: 40px; background: linear-gradient(90deg, #0a0a0a 0, #0a0a0a 388px, #1f1c05 400px, #15150d 480px, #10100e 700px, #16110a 800px, #080a08 1000px, #101010); font-size: 14.500px; }
  .cortana { width: 344px; background: #333; display: flex; align-items: center; gap: 9px; padding: 0 14px 0 9px; box-sizing: border-box; color: #b0b0b0; line-height: 22px; }
  .cortana .t { margin-top: 1px; }
  .mic { margin-left: auto; }
  .chrome { width: 48px; box-sizing: border-box; background: #464644; border-bottom: 2px solid #6cc04a; display: grid; place-items: center; padding-top: 1px; }
  .lang { width: 36px; line-height: 39px; font-size: 12px; }
  .clock { width: 58px; display: flex; flex-direction: column; align-items: center; font-size: 12px; line-height: 18px; padding-top: 2px; }
</style>
